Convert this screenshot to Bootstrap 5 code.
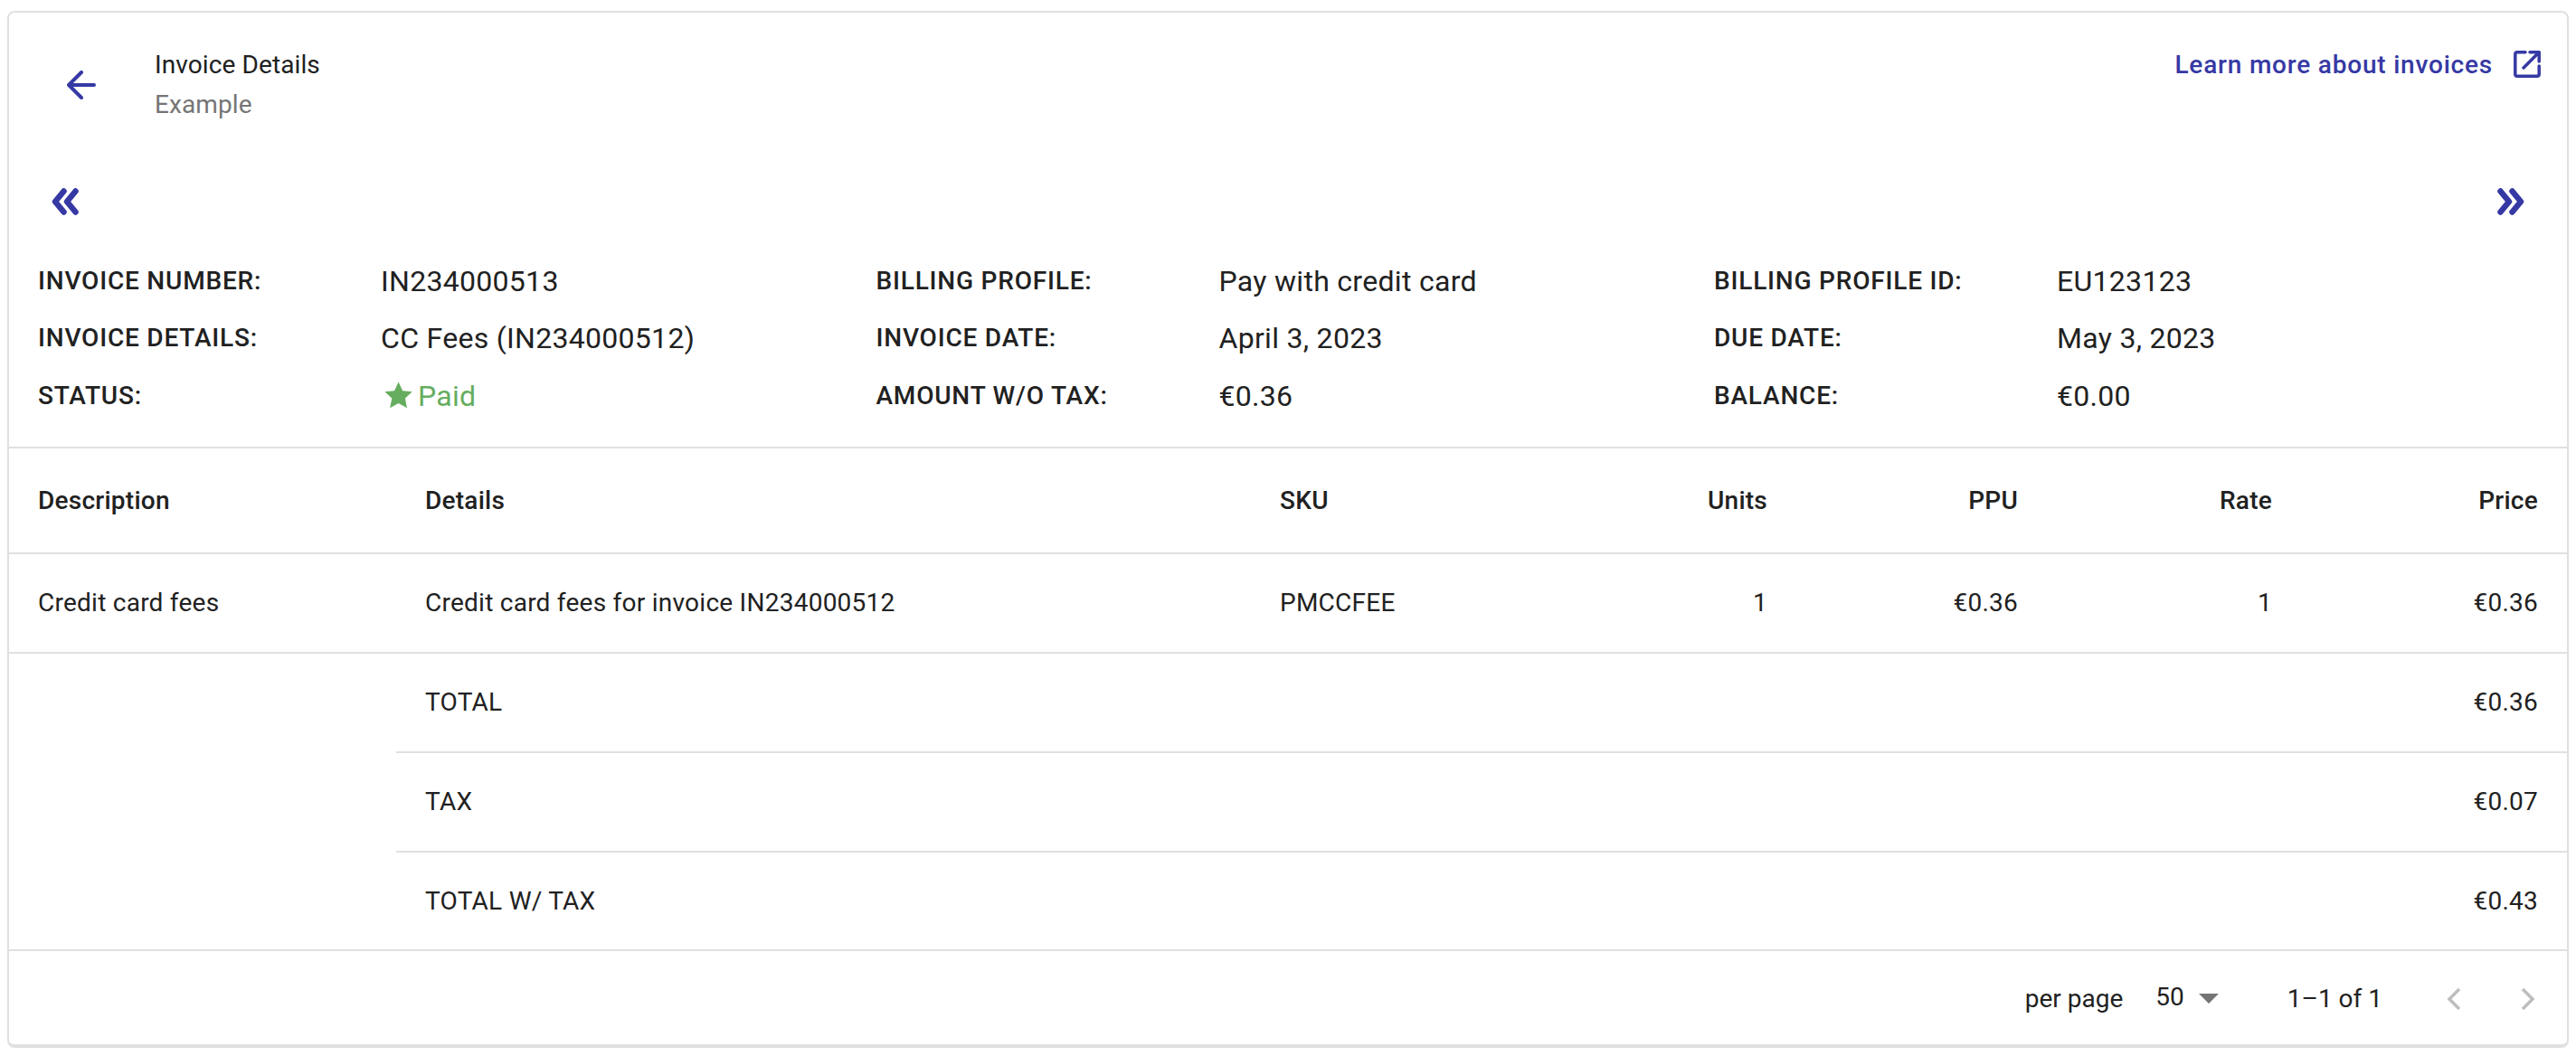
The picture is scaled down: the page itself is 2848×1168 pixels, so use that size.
<!DOCTYPE html>
<html lang="en">
<head>
  <meta charset="UTF-8">
  <meta name="viewport" content="width=device-width, initial-scale=1.0">
  <title>Invoice Details</title>
  <link href="https://cdn.jsdelivr.net/npm/bootstrap@5.3.0/dist/css/bootstrap.min.css" rel="stylesheet">
  <style>
    body { font-family: Roboto, "Liberation Sans", sans-serif; background: #fff; color: #212121; font-size: 28px; }
    .invoice-card { margin: 12px 8px 9px 8px; height: 1147px; border: 2px solid #e0e0e0; border-bottom-width: 4px; border-radius: 8px; }
    .invoice-card > * { flex-shrink: 0; }
    .top-bar { height: 166px; padding: 36px 29px 0 48px; }
    .back-icon { width: 64px; height: 64px; margin-right: 49px; margin-top: 12px; }
    .title-main { line-height: 44px; letter-spacing: .1px; }
    .title-sub { line-height: 44px; color: #757575; letter-spacing: .1px; }
    .learn-link { color: #3639a4; font-weight: 500; letter-spacing: .8px; text-decoration: none; line-height: 44px; }
    .learn-link svg { margin-left: 23px; margin-top: -2px; }
    .pager-row { height: 99px; padding: 28px 46px 0 46px; }
    .info-block { padding: 0 0 25px 32px; height: 217px; border-bottom: 2px solid #e0e0e0; }
    .info-block .row { --bs-gutter-x: 0; height: 63.5px; align-items: center; }
    .info-cell { width: 926.5px; flex: none; }
    .info-label { width: 379px; font-weight: 500; letter-spacing: .8px; }
    .info-val { font-size: 32px; letter-spacing: .3px; }
    .paid-val { color: #66ad5f; }
    .paid-val svg { margin-right: 5px; margin-left: -2px; }
    .inv-table { table-layout: fixed; width: 100%; margin: 0; --bs-table-color: #212121; }
    .inv-table th, .inv-table td { padding: 0 32px; vertical-align: middle; border-bottom: 2px solid #e0e0e0; height: 110px; letter-spacing: .25px; }
    .inv-table th { font-weight: 500; height: 116px; }
    .inv-table tr.end-row td { height: 109px; }
    .w-desc { width: 428px; } .w-details { width: 945px; } .w-sku { width: 317px; }
    .w-units { width: 286px; } .w-ppu { width: 277px; } .w-rate { width: 281px; } .w-price { width: 294px; }
    .foot-bar { height: 105px; padding-right: 35px; }
    .per-page { margin-right: 36px; }
    .per-num { margin-right: 16px; margin-bottom: 4px; }
    .range-text { margin-left: 76px; margin-right: 71px; }
    .pager-gap { margin-right: 66px; }
  </style>
</head>
<body>
  <div class="card invoice-card overflow-hidden">
    <!-- cabecera -->
    <div class="top-bar d-flex justify-content-between align-items-start">
      <div class="d-flex">
        <div class="back-icon d-flex align-items-center justify-content-center">
          <svg width="32" height="32" viewBox="0 0 32 32" fill="none" stroke="#3639a4" stroke-width="4" stroke-linecap="round" stroke-linejoin="round"><path d="M30 16H3M16 2 2 16 16 30"/></svg>
        </div>
        <div>
          <div class="title-main">Invoice Details</div>
          <div class="title-sub">Example</div>
        </div>
      </div>
      <a class="learn-link d-flex align-items-center" href="#">Learn more about invoices
        <svg width="30" height="30" viewBox="0 0 30 30" fill="none" stroke="#3639a4" stroke-width="3.500" stroke-linecap="round" stroke-linejoin="round"><path d="M13 1.800H4Q1.800 1.800 1.800 4V26Q1.800 28.200 4 28.200H26Q28.200 28.200 28.200 26V17M18 1.800H28.200V12M28.200 1.800 11 19"/></svg>
      </a>
    </div>

    <div class="pager-row d-flex justify-content-between">
      <svg width="32" height="30" viewBox="0 0 32 30" fill="none" stroke="#3639a4" stroke-width="6.500" stroke-linecap="round" stroke-linejoin="round"><path d="M14.500 3.500 5 15 14.500 26.500M27.500 3.500 18 15 27.500 26.500"/></svg>
      <svg width="32" height="30" viewBox="0 0 32 30" fill="none" stroke="#3639a4" stroke-width="6.500" stroke-linecap="round" stroke-linejoin="round"><path d="M4.500 3.500 14 15 4.500 26.500M17.500 3.500 27 15 17.500 26.500"/></svg>
    </div>

    <!-- datos de la factura -->
    <div class="info-block">
      <div class="row">
        <div class="info-cell d-flex align-items-center"><div class="info-label">INVOICE NUMBER:</div><div class="info-val">IN234000513</div></div>
        <div class="info-cell d-flex align-items-center"><div class="info-label">BILLING PROFILE:</div><div class="info-val">Pay with credit card</div></div>
        <div class="info-cell d-flex align-items-center"><div class="info-label">BILLING PROFILE ID:</div><div class="info-val">EU123123</div></div>
      </div>
      <div class="row">
        <div class="info-cell d-flex align-items-center"><div class="info-label">INVOICE DETAILS:</div><div class="info-val">CC Fees (IN234000512)</div></div>
        <div class="info-cell d-flex align-items-center"><div class="info-label">INVOICE DATE:</div><div class="info-val">April 3, 2023</div></div>
        <div class="info-cell d-flex align-items-center"><div class="info-label">DUE DATE:</div><div class="info-val">May 3, 2023</div></div>
      </div>
      <div class="row">
        <div class="info-cell d-flex align-items-center"><div class="info-label">STATUS:</div>
          <div class="info-val paid-val d-flex align-items-center">
            <svg width="38" height="31" viewBox="0 0 36 30" fill="#66ad5f"><path d="M20.500 .5l4.400 9.300 10.300 1.200-7.600 7 2 10.300-9.100-5.100-9.100 5.100 2-10.300-7.600-7 10.300-1.200z"/></svg>Paid
          </div>
        </div>
        <div class="info-cell d-flex align-items-center"><div class="info-label">AMOUNT W/O TAX:</div><div class="info-val">€0.36</div></div>
        <div class="info-cell d-flex align-items-center"><div class="info-label">BALANCE:</div><div class="info-val">€0.00</div></div>
      </div>
    </div>

    <!-- tabla -->
    <table class="table inv-table">
      <colgroup>
        <col class="w-desc"><col class="w-details"><col class="w-sku"><col class="w-units"><col class="w-ppu"><col class="w-rate"><col class="w-price">
      </colgroup>
      <thead>
        <tr>
          <th>Description</th>
          <th>Details</th>
          <th>SKU</th>
          <th class="text-end">Units</th>
          <th class="text-end">PPU</th>
          <th class="text-end">Rate</th>
          <th class="text-end">Price</th>
        </tr>
      </thead>
      <tbody>
        <tr>
          <td>Credit card fees</td>
          <td>Credit card fees for invoice IN234000512</td>
          <td>PMCCFEE</td>
          <td class="text-end">1</td>
          <td class="text-end">€0.36</td>
          <td class="text-end">1</td>
          <td class="text-end">€0.36</td>
        </tr>
        <tr>
          <td rowspan="3"></td>
          <td colspan="5">TOTAL</td>
          <td class="text-end">€0.36</td>
        </tr>
        <tr>
          <td colspan="5">TAX</td>
          <td class="text-end">€0.07</td>
        </tr>
        <tr class="end-row">
          <td colspan="5">TOTAL W/ TAX</td>
          <td class="text-end">€0.43</td>
        </tr>
      </tbody>
    </table>

    <!-- paginacion -->
    <div class="foot-bar d-flex align-items-center justify-content-end">
      <span class="per-page">per page</span>
      <span class="per-num">50</span>
      <svg width="22" height="11" viewBox="0 0 20 10" fill="#757575"><path d="M0 0h20L10 10z"/></svg>
      <span class="range-text">1–1 of 1</span>
      <svg class="pager-gap" width="16" height="26" viewBox="0 0 16 26" fill="none" stroke="#bdbdbd" stroke-width="3.500"><path d="M14 2 3 13 14 24"/></svg>
      <svg width="16" height="26" viewBox="0 0 16 26" fill="none" stroke="#bdbdbd" stroke-width="3.500"><path d="M2 2 13 13 2 24"/></svg>
    </div>
  </div>
  <script src="https://cdn.jsdelivr.net/npm/bootstrap@5.3.0/dist/js/bootstrap.bundle.min.js"></script>
</body>
</html>
